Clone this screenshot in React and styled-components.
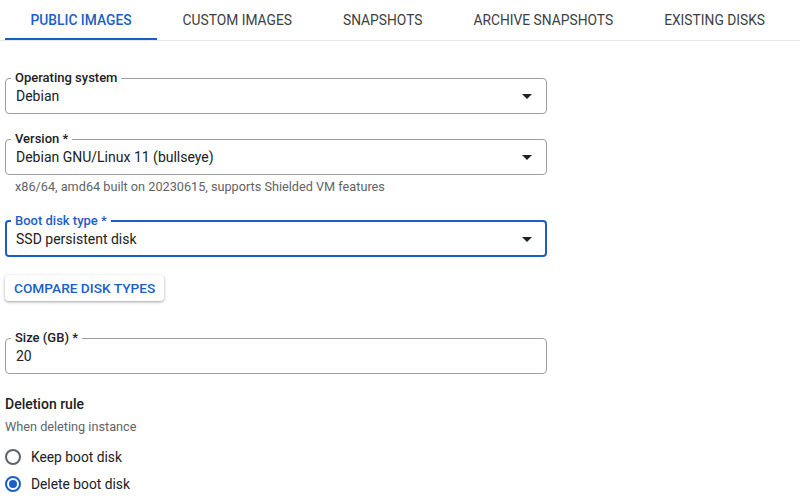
import React from 'react';
import styled, { createGlobalStyle } from 'styled-components';

const GlobalStyle = createGlobalStyle`
  body {
    margin: 0;
    background: #fff;
    font-family: Roboto, 'Noto Sans', Arial, sans-serif;
    color: #202124;
  }
`;

const Page = styled.div`
  width: 800px;
  height: 498px;
  overflow: hidden;
`;

const TabBar = styled.div`
  display: flex;
  height: 40px;
  padding-left: 5px;
  border-bottom: 1px solid #e8eaed;
`;

const Tab = styled.div`
  display: flex;
  align-items: center;
  flex-shrink: 0;
  white-space: nowrap;
  padding: 0 25.5px;
  font-size: 13.8px;
  font-weight: ${(p) => (p.active ? 500 : 400)};
  color: ${(p) => (p.active ? '#1a5fc8' : '#3c4043')};
  box-shadow: ${(p) => (p.active ? 'inset 0 -2px 0 #1a5fc8' : 'none')};
`;

const Form = styled.div`
  display: flex;
  flex-direction: column;
  padding: 29px 0 0 5px;
  width: 542px;
`;

const Field = styled.fieldset`
  margin: ${(p) => p.mt || 0}px 0 0 0;
  padding: 0 ${(p) => (p.focused ? 13 : 14)}px ${(p) => (p.focused ? 6 : 7)}px
    ${(p) => (p.focused ? 9 : 10)}px;
  border: ${(p) => (p.focused ? '2px solid #1a5fc8' : '1px solid #9e9e9e')};
  border-radius: 4px;
  min-width: 0;
`;

const Legend = styled.legend`
  margin-left: -5px;
  padding: 0 4px;
  font-size: 13px;
  line-height: 16px;
  font-weight: 500;
  color: ${(p) => (p.focused ? '#1a5fc8' : '#202124')};
`;

const ValueRow = styled.div`
  display: flex;
  align-items: center;
  justify-content: space-between;
  height: 20px;
  font-size: 14px;
  color: #202124;
`;

const Arrow = styled.span`
  width: 0;
  height: 0;
  border-left: 5px solid transparent;
  border-right: 5px solid transparent;
  border-top: 5px solid #202124;
`;

const Hint = styled.div`
  margin-top: ${(p) => p.mt || 0}px;
  padding-left: ${(p) => p.pl || 0}px;
  font-size: 12.7px;
  line-height: 16px;
  color: #5f6368;
`;

const Button = styled.button`
  align-self: flex-start;
  margin-top: 18px;
  height: 26px;
  padding: 0 9px;
  border: none;
  border-radius: 4px;
  background: #fff;
  box-shadow: 0 1px 2px rgba(60, 64, 67, 0.3), 0 1px 3px 1px rgba(60, 64, 67, 0.15);
  font-family: inherit;
  font-size: 13.7px;
  font-weight: 500;
  color: #1a5fc8;
`;

const SectionTitle = styled.div`
  margin-top: 20px;
  font-size: 14px;
  line-height: 20px;
  font-weight: 500;
  color: #202124;
`;

const RadioGroup = styled.div`
  display: flex;
  flex-direction: column;
  gap: 3px;
  margin-top: 10px;
`;

const RadioRow = styled.label`
  display: flex;
  align-items: center;
  gap: 10px;
  height: 24px;
  font-size: 13.8px;
  color: #202124;
`;

const RadioCircle = styled.span`
  box-sizing: border-box;
  width: 16px;
  height: 16px;
  border-radius: 50%;
  border: 2px solid ${(p) => (p.checked ? '#1a5fc8' : '#5f6368')};
  display: flex;
  align-items: center;
  justify-content: center;

  &::after {
    content: '';
    width: 8px;
    height: 8px;
    border-radius: 50%;
    background: ${(p) => (p.checked ? '#1a5fc8' : 'transparent')};
  }
`;

const tabs = ['PUBLIC IMAGES', 'CUSTOM IMAGES', 'SNAPSHOTS', 'ARCHIVE SNAPSHOTS', 'EXISTING DISKS'];

function SelectField({ label, value, focused, mt, select = true }) {
  return (
    <Field focused={focused} mt={mt}>
      <Legend focused={focused}>{label}</Legend>
      <ValueRow>
        <span>{value}</span>
        {select && <Arrow />}
      </ValueRow>
    </Field>
  );
}

export default function App() {
  return (
    <Page>
      <GlobalStyle />
      <TabBar>
        {tabs.map((t, i) => (
          <Tab key={t} active={i === 0}>
            {t}
          </Tab>
        ))}
      </TabBar>
      <Form>
        <SelectField label="Operating system" value="Debian" />
        <SelectField label="Version *" value="Debian GNU/Linux 11 (bullseye)" mt={17} />
        <Hint mt={4} pl={10}>
          x86/64, amd64 built on 20230615, supports Shielded VM features
        </Hint>
        <SelectField label="Boot disk type *" value="SSD persistent disk" focused mt={18} />
        <Button type="button">COMPARE DISK TYPES</Button>
        <SelectField label="Size (GB) *" value="20" select={false} mt={29} />
        <SectionTitle>Deletion rule</SectionTitle>
        <Hint mt={5}>When deleting instance</Hint>
        <RadioGroup>
          <RadioRow>
            <RadioCircle />
            Keep boot disk
          </RadioRow>
          <RadioRow>
            <RadioCircle checked />
            Delete boot disk
          </RadioRow>
        </RadioGroup>
      </Form>
    </Page>
  );
}
